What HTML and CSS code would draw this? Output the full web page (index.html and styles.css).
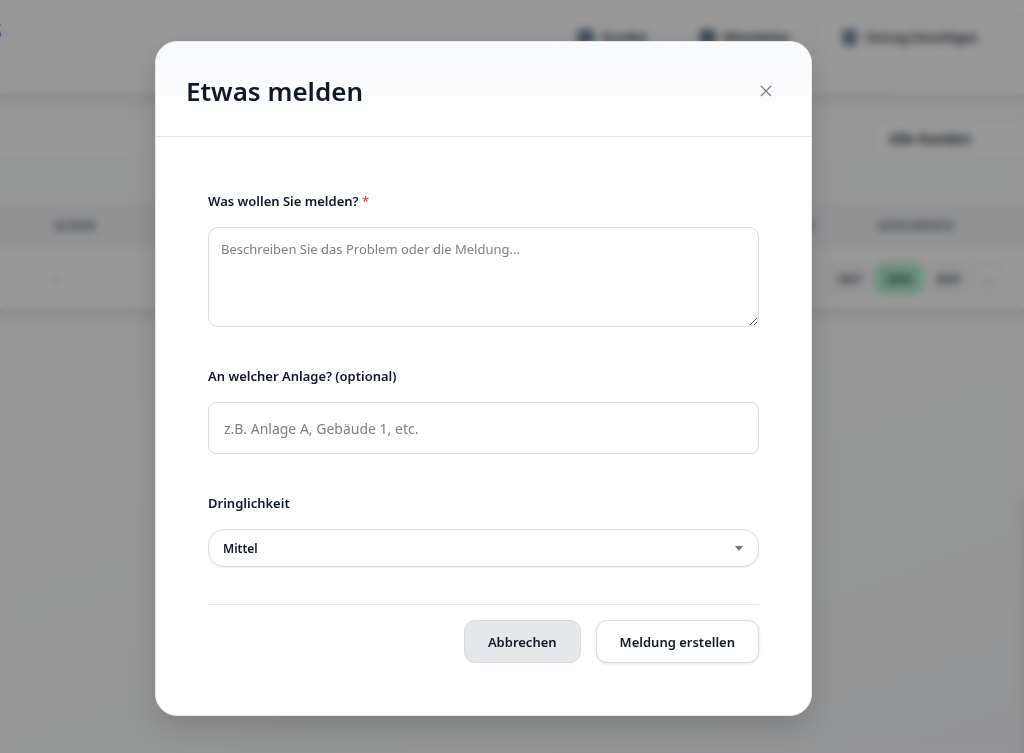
FILE: index.html
```html
<!DOCTYPE html>
<html lang="de">
<head>
    <meta charset="UTF-8">
    <meta name="viewport" content="width=device-width, initial-scale=1.0">
    <title>Etwas melden</title>
    <link rel="stylesheet" href="styles.css">
</head>
<body>
    <div class="app" inert>
        <header class="app-header">
            <h1>s</h1>
            <nav class="app-nav">
                <button type="button" class="nav-btn">
                    <svg width="17" height="17" viewBox="0 0 18 18"><rect x="1" y="1" width="16" height="16" rx="2" fill="#4b6480"/><circle cx="9" cy="7" r="3" fill="#7f9cbc"/><path d="M4 15c0-6 10-6 10 0z" fill="#7f9cbc"/></svg>
                    Kunden
                </button>
                <button type="button" class="nav-btn">
                    <svg width="17" height="17" viewBox="0 0 18 18"><rect x="1" y="1" width="16" height="16" rx="2" fill="#4b6480"/><path d="M4 14c0-6 10-6 10 0z" fill="#7f9cbc"/></svg>
                    Mitarbeiter
                </button>
                <button type="button" class="nav-btn">
                    <svg width="17" height="17" viewBox="0 0 18 18"><rect x="2" y="1" width="14" height="16" rx="2" fill="#4b6480"/><path d="M6 5h6M6 9h6M6 13h4" stroke="#c3d3e6" stroke-width="2"/></svg>
                    Eintrag hinzufügen
                </button>
                <button type="button" class="nav-btn">
                    <svg width="17" height="17" viewBox="0 0 18 18"><rect x="0" y="2" width="16" height="14" rx="2" fill="#374151"/></svg>
                </button>
            </nav>
        </header>

        <main class="card">
            <div class="toolbar">
                <input type="search" class="search" aria-label="Suche">
                <select class="filter" aria-label="Kunde">
                    <option>Alle Kunden</option>
                </select>
            </div>
            <table class="entries">
                <thead>
                    <tr>
                        <th>KUNDE</th>
                        <th class="col-right">E</th>
                        <th class="col-docs">DOKUMENTE</th>
                        <th class="col-end"></th>
                    </tr>
                </thead>
                <tbody>
                    <tr>
                        <td>-</td>
                        <td></td>
                        <td class="col-docs">
                            <div class="years">
                                <button type="button" class="year">2027</button>
                                <button type="button" class="year active">2026</button>
                                <button type="button" class="year">2025</button>
                                <button type="button" class="year more">...</button>
                            </div>
                        </td>
                        <td></td>
                    </tr>
                </tbody>
            </table>
        </main>
        <aside class="side-panel"></aside>
    </div>

    <div class="modal-overlay">
        <div class="modal" role="dialog" aria-modal="true" aria-labelledby="modalTitle">
            <div class="modal-header">
                <h2 id="modalTitle">Etwas melden</h2>
                <button type="button" class="modal-close" aria-label="Schließen">
                    <svg width="12" height="12" viewBox="0 0 12 12"><path d="M1 1l10 10M11 1L1 11" fill="none" stroke="#6b7280" stroke-width="1.2"/></svg>
                </button>
            </div>
            <form class="modal-body">
                <div class="form-group">
                    <label for="reportText">Was wollen Sie melden? <span class="required">*</span></label>
                    <textarea id="reportText" placeholder="Beschreiben Sie das Problem oder die Meldung..." required></textarea>
                </div>
                <div class="form-group">
                    <label for="reportAsset">An welcher Anlage? (optional)</label>
                    <input type="text" id="reportAsset" placeholder="z.B. Anlage A, Gebäude 1, etc.">
                </div>
                <div class="form-group">
                    <label for="reportUrgency">Dringlichkeit</label>
                    <div class="select-wrap">
                        <select id="reportUrgency">
                            <option>Niedrig</option>
                            <option selected>Mittel</option>
                            <option>Hoch</option>
                        </select>
                    </div>
                </div>
                <div class="form-actions">
                    <button type="button" class="btn btn-secondary">Abbrechen</button>
                    <button type="submit" class="btn">Meldung erstellen</button>
                </div>
            </form>
        </div>
    </div>
</body>
</html>
```

FILE: styles.css
```css
* {
    margin: 0;
    padding: 0;
    box-sizing: border-box;
}

body {
    font-family: "Noto Sans", "Open Sans", sans-serif;
    font-size: 13px;
    color: #111827;
    background: linear-gradient(160deg, #fafafa 0%, #fdfdfd 45%, #f9fbfa 70%, #f7f7fa 100%);
    min-height: 100vh;
    overflow: hidden;
}

button,
input,
select,
textarea {
    font-family: inherit;
    color: inherit;
}

/* Page behind the dialog */
.app {
    min-height: 100vh;
    margin: 0 -60px 0 -12px;
    overflow: hidden;
}

.app-header {
    display: flex;
    justify-content: space-between;
    height: 94px;
    padding: 14px 16px 0 0;
    background: #fefefe;
    box-shadow: 0 3px 8px rgba(0, 0, 0, 0.14);
}

.app-header h1 {
    font-size: 28px;
    line-height: 28px;
}

.app-nav {
    display: flex;
    gap: 7px;
    height: 46px;
}

.nav-btn {
    display: flex;
    align-items: center;
    gap: 8px;
    padding: 0 21px;
    border: 1px solid #e5e7eb;
    border-radius: 10px;
    background: #fefefe;
    font-size: 12px;
    font-weight: 600;
}

.card {
    margin-top: 12px;
    background: #fefefe;
    box-shadow: 0 4px 12px rgba(0, 0, 0, 0.14);
}

.toolbar {
    display: flex;
    align-items: center;
    gap: 20px;
    height: 97px;
    padding-bottom: 32px;
    background: #fbfcfc;
}

.search {
    flex: 1;
    height: 39px;
    border: 1px solid #eceeef;
    background: #fefefe;
}

.filter {
    appearance: none;
    width: 212px;
    height: 39px;
    padding: 0 16px;
    border: 1px solid #e5e7eb;
    border-radius: 12px;
    background: #fefefe;
    font-size: 14px;
    font-weight: 600;
}

.entries {
    width: 100%;
    table-layout: fixed;
    border-collapse: collapse;
}

.entries th {
    height: 45px;
    padding: 0 10px 0 66px;
    background: #f3f4f6;
    color: #6b7280;
    font-size: 12px;
    font-weight: 700;
    text-align: left;
}

.entries td {
    height: 61px;
    padding-left: 66px;
}

.entries .col-right {
    text-align: right;
}

.entries .col-docs {
    width: 184px;
    padding: 0;
    text-align: center;
}

.entries .col-end {
    width: 72px;
}

.years {
    display: flex;
    justify-content: center;
    gap: 5px;
}

.year {
    height: 31px;
    padding: 0 7px;
    border: 1px solid #d9dbdf;
    border-radius: 8px;
    background: #fbfbfb;
    font-size: 11px;
    font-weight: 600;
}

.year.active {
    padding: 0 10px;
    border-color: #a7f3d0;
    background: #b0f0d2;
}

.year.more {
    padding: 0 9px;
    background: #fefefe;
}

.side-panel {
    position: fixed;
    top: 500px;
    bottom: 0;
    left: 100%;
    width: 300px;
    box-shadow: 0 0 8px rgba(0, 0, 0, 0.15);
}

/* Dialog */
.modal-overlay {
    position: fixed;
    inset: 0;
    display: flex;
    align-items: center;
    justify-content: center;
    padding: 4px 57px 0 0;
    background: rgba(0, 0, 0, 0.4);
    backdrop-filter: blur(4px);
}

.modal {
    width: 100%;
    max-width: 657px;
    border: 1px solid #e5e7eb;
    border-radius: 22px;
    background: #fff;
    box-shadow: 0 12px 32px rgba(0, 0, 0, 0.16);
    overflow: hidden;
}

.modal-header {
    display: flex;
    align-items: center;
    justify-content: space-between;
    padding: 30px 30px 26px;
    border-bottom: 1px solid #e5e7eb;
    background: linear-gradient(180deg, #f9fafc, #fff);
}

.modal-header h2 {
    font-size: 26px;
    line-height: 38px;
    font-weight: 600;
}

.modal-close {
    display: flex;
    align-items: center;
    justify-content: center;
    width: 30px;
    height: 30px;
    border: none;
    background: none;
    cursor: pointer;
}

.modal-body {
    padding: 53px 52px 52px;
}

.form-group {
    margin-bottom: 38px;
}

.form-group label {
    display: block;
    margin-bottom: 15px;
    line-height: 22px;
    font-weight: 600;
}

.required {
    color: #ef4444;
}

.form-group input,
.form-group textarea,
.form-group select {
    display: block;
    width: 100%;
    border: 1px solid #d9dbdf;
    background: #fff;
}

.form-group textarea {
    height: 100px;
    padding: 10px 12px;
    border-radius: 10px;
    font-size: 13px;
    line-height: 22px;
    resize: vertical;
}

.form-group input {
    height: 52px;
    padding: 0 15px;
    border-radius: 8px;
    font-size: 14px;
}

.form-group ::placeholder {
    color: #808080;
}

.select-wrap {
    display: grid;
    align-items: center;
}

.form-group select {
    grid-area: 1 / 1;
    appearance: none;
    height: 38px;
    padding: 0 14px;
    border-radius: 16px;
    box-shadow: 0 1px 2px rgba(0, 0, 0, 0.06);
    font-size: 12px;
    font-weight: 600;
}

.select-wrap::after {
    content: "";
    grid-area: 1 / 1;
    justify-self: end;
    margin-right: 16px;
    border: solid transparent;
    border-width: 5px 4px 0;
    border-top-color: #6b7280;
    pointer-events: none;
}

.form-actions {
    display: flex;
    justify-content: flex-end;
    gap: 15px;
    margin-top: -1px;
    padding-top: 15px;
    border-top: 1px solid #e5e7eb;
}

.btn {
    height: 43px;
    padding: 0 23px;
    border: 1px solid #d9dbdf;
    border-radius: 11px;
    background: #fff;
    box-shadow: 0 1px 3px rgba(0, 0, 0, 0.1);
    font-size: 13px;
    font-weight: 600;
    cursor: pointer;
}

.btn-secondary {
    background: #e5e7eb;
    box-shadow: none;
}
```
